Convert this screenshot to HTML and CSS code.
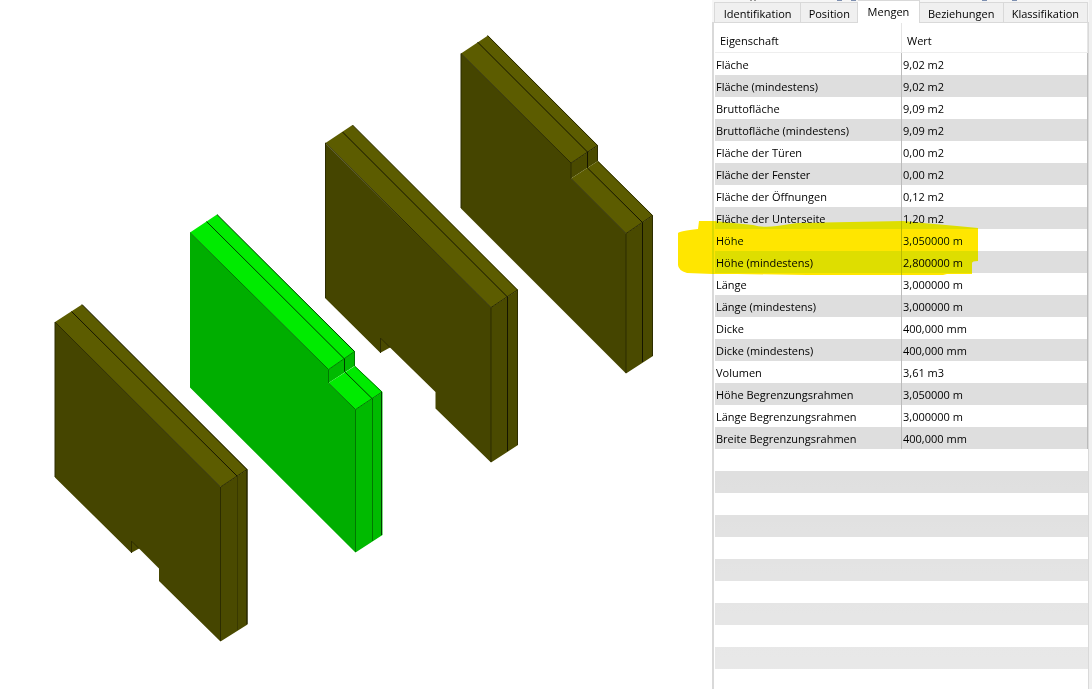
FILE: index.html
```html
<!DOCTYPE html>
<html lang="de">
<head>
<meta charset="utf-8">
<title>Mengen</title>
<link rel="stylesheet" href="styles.css">
</head>
<body>
<div class="app">
  <main class="viewport">
    <svg class="scene" viewBox="0 0 712 689" role="img" aria-label="3D-Ansicht der Wände">
      <g class="wall">
        <path class="side" d="M220.5 487L247.5 469.5V624.5L220.5 641.5ZM131 540V553L140 548Z"/>
        <path class="top" d="M55 322L82 304.5L247.5 469.5L220.5 487Z"/>
        <path class="front" d="M55 322L220.5 487V641.5L159 581V568.5L139 548.5L131.5 541V553L55 477.5Z"/>
        <path class="edge" d="M55 477V322L220.5 487V641M220.5 487L247 469.5M131.5 553V541L139 548.5"/>
        <path class="edge dark" d="M71.5 311.5L237 476M82 304.5L247 469.5V624"/>
        <path class="edge faint" d="M237.5 476V630"/>
      </g>
      <g class="wall selected">
        <path class="side" d="M328.5 369.5L354.5 351.5V366L328.5 383ZM355.5 409.5L382.5 392V535L355.5 552.5Z"/>
        <path class="top" d="M190 232.5L217 214.5L355 351.5L328.5 369.5ZM328.5 383L355 366L382.5 392L355.5 409.5Z"/>
        <path class="front" d="M190 232.5L328.5 369.5V383L355.5 409.5V552.5L190 387.5Z"/>
        <path class="edge" d="M190 232.5L328.5 369.5V383L355.5 409.5V552M328.5 369.5L354.5 351.5V366L382 392M355.5 409.5L382 392M372.5 399V541"/>
        <path class="edge dark" d="M206.5 221.5L344.5 359V371.5L372.5 399M217 214.5L354.5 351.5M381.5 392V535"/>
      </g>
      <g class="wall">
        <path class="side" d="M491 307.5L518 290V445L491 462.5ZM380 337V353L391 347Z"/>
        <path class="top" d="M325.5 143L352.5 125L518 290L491 307.5Z"/>
        <path class="front" d="M325 143L491 307.5V462.5L435.5 408.5V392L390 347.5L380.5 338V353L325 298Z"/>
        <path class="edge" d="M325.5 298V143L491 307.5V462M491 307.5L517.5 290M380.5 353V338L390 347.5M352.5 125L517.5 290V445"/>
        <path class="edge dark" d="M342.5 132L507.5 297V451"/>
      </g>
      <g class="wall">
        <path class="side" d="M571 163L598 145.5V161L571 178.5ZM626 233.5L653 215.5V356L626 373.5Z"/>
        <path class="top" d="M461 53.5L488 35.5L598 145.5L571 163ZM571 178.5L598 161L653 215.5L626 233.5Z"/>
        <path class="front" d="M461 53.5L571 163V178.5L626 233.5V373.5L461 208.5Z"/>
        <path class="edge" d="M461 208V53.5L571 163V178.5L626 233.5V373M571 163L597.5 145.5V161L652.5 215.5V356M626 233.5L652.5 215.5M487.5 35.5L597.5 145.5"/>
        <path class="edge dark" d="M477.5 42L587.5 152V168L642.5 222.5V362"/>
      </g>
    </svg>
  </main>

  <aside class="panel">
    <nav class="tabs" role="tablist">
      <button class="tab" type="button" role="tab" aria-selected="false">Identifikation</button>
      <button class="tab" type="button" role="tab" aria-selected="false">Position</button>
      <button class="tab active" type="button" role="tab" aria-selected="true">Mengen</button>
      <button class="tab" type="button" role="tab" aria-selected="false">Beziehungen</button>
      <button class="tab" type="button" role="tab" aria-selected="false">Klassifikation</button>
    </nav>
    <div class="content">
      <table class="properties">
        <thead>
          <tr><th class="name" scope="col">Eigenschaft</th><th scope="col">Wert</th></tr>
        </thead>
        <tbody>
          <tr><td>Fläche</td><td>9,02 m2</td></tr>
          <tr><td>Fläche (mindestens)</td><td>9,02 m2</td></tr>
          <tr><td>Bruttofläche</td><td>9,09 m2</td></tr>
          <tr><td>Bruttofläche (mindestens)</td><td>9,09 m2</td></tr>
          <tr><td>Fläche der Türen</td><td>0,00 m2</td></tr>
          <tr><td>Fläche der Fenster</td><td>0,00 m2</td></tr>
          <tr><td>Fläche der Öffnungen</td><td>0,12 m2</td></tr>
          <tr><td>Fläche der Unterseite</td><td>1,20 m2</td></tr>
          <tr>
            <td class="marked">Höhe<svg class="marker" viewBox="0 0 300 56" aria-hidden="true"><path d="M21 1H36L75 5Q85 8 99 6L119 3L225 1L245 3L279 6L300 8V41Q294 41 294 43V54H269L265 55H129L59 54H35L9 53Q0 50 0 45V13Q2 11 20 9Z"/></svg></td>
            <td>3,050000 m</td>
          </tr>
          <tr><td>Höhe (mindestens)</td><td>2,800000 m</td></tr>
          <tr><td>Länge</td><td>3,000000 m</td></tr>
          <tr><td>Länge (mindestens)</td><td>3,000000 m</td></tr>
          <tr><td>Dicke</td><td>400,000 mm</td></tr>
          <tr><td>Dicke (mindestens)</td><td>400,000 mm</td></tr>
          <tr><td>Volumen</td><td>3,61 m3</td></tr>
          <tr><td>Höhe Begrenzungsrahmen</td><td>3,050000 m</td></tr>
          <tr><td>Länge Begrenzungsrahmen</td><td>3,000000 m</td></tr>
          <tr><td>Breite Begrenzungsrahmen</td><td>400,000 mm</td></tr>
        </tbody>
      </table>
      <div class="empty-rows"></div>
    </div>
  </aside>
</div>
</body>
</html>
```

FILE: styles.css
```css
* {
  box-sizing: border-box;
}

body {
  margin: 0;
  background: #fff;
  color: #000;
  font: 11px/16px "Open Sans", "Noto Sans", sans-serif;
}

.app {
  display: grid;
  grid-template-columns: minmax(0, 1fr) 380px;
  min-height: 100vh;
}

.scene {
  display: block;
  width: 100%;
}

.wall .front { fill: #454500; }
.wall .top { fill: #5c5c00; }
.wall .side { fill: #4a4a00; }

.wall .edge {
  fill: none;
  stroke: #2c2c00;
  stroke-width: 1;
}

.wall .edge.dark { stroke: #151500; }
.wall .edge.faint { stroke: #393900; }

.selected .front { fill: #00ae00; }
.selected .top { fill: #00eb00; }
.selected .side { fill: #00ba00; }
.selected .edge { stroke: #007800; }
.selected .edge.dark { stroke: #003c00; }

.panel {
  display: flex;
  flex-direction: column;
  padding-right: 3px;
  background: linear-gradient(#f0f0f0, #f0f0f0) right / 3px 100% no-repeat;
}

/* The lower edge of the toolbar labels shows above the tabs. */
.tabs {
  display: grid;
  grid-template-columns: 87fr 57fr 61fr 84fr 84fr;
  align-items: end;
  height: 23px;
  padding: 0 1px 0 2px;
  background:
    linear-gradient(#d9d9d9, #d9d9d9) bottom / 100% 1px no-repeat,
    linear-gradient(#999, #999) 38px 0 / 2px 1px no-repeat,
    linear-gradient(#999, #999) 42px 0 / 2px 1px no-repeat,
    linear-gradient(#7d8fb0, #7d8fb0) 125px 0 / 5px 1px no-repeat,
    linear-gradient(#7d8fb0, #7d8fb0) 139px 0 / 5px 1px no-repeat,
    linear-gradient(#7d8fb0, #7d8fb0) 270px 0 / 5px 1px no-repeat,
    linear-gradient(#7d8fb0, #7d8fb0) 300px 0 / 5px 1px no-repeat,
    #f6f6f6;
}

.tab {
  height: 21px;
  padding: 2px 0 0;
  border: 1px solid #d9d9d9;
  border-left-width: 0;
  background: #f0f0f0;
  color: inherit;
  font: inherit;
  white-space: nowrap;
}

.tab:first-child {
  border-left-width: 1px;
}

.tab.active {
  height: 23px;
  padding: 0;
  border-bottom: 0;
  background: #fff;
}

.content {
  display: flex;
  flex: 1;
  flex-direction: column;
  padding-left: 1px;
  border-right: 1px solid #d9d9d9;
  border-left: 2px solid #d9d9d9;
}

.properties {
  width: 100%;
  border-collapse: separate;
  border-spacing: 0;
  table-layout: fixed;
}

.properties th {
  height: 30px;
  padding: 6px 5px 0;
  border-right: 1px solid #e5e5e5;
  border-bottom: 1px solid #eee;
  font-weight: 400;
  text-align: left;
}

.properties .name {
  width: 187px;
}

.properties td {
  height: 22px;
  padding: 2px 1px 0;
  border-right: 1px solid #bbb;
}

.properties tbody tr:nth-child(even) {
  background: #dedede;
}

.marked {
  position: relative;
}

.marker {
  position: absolute;
  top: -9px;
  left: -37px;
  width: 300px;
  height: 56px;
  mix-blend-mode: darken;
  fill: #ffe600;
}

.empty-rows {
  flex: 1;
  background:
    linear-gradient(rgba(255, 255, 255, 0), rgba(255, 255, 255, 0.35)),
    repeating-linear-gradient(#fff 0 22px, #dedede 22px 44px);
}
```
